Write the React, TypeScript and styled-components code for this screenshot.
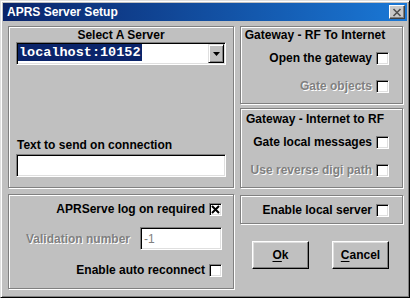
import React from "react";
import styled, { createGlobalStyle } from "styled-components";

const Global = createGlobalStyle`
  html, body { margin: 0; padding: 0; background: #c0c0c0; }
  body { font-family: "Liberation Sans", Arial, sans-serif; }
  * { box-sizing: border-box; }
`;

const Window = styled.div`
  width: 410px;
  height: 298px;
  background: #c0c0c0;
  border: 1px solid;
  border-color: #dfdfdf #000 #000 #dfdfdf;
  box-shadow: inset 1px 1px 0 #fff, inset -1px -1px 0 #808080;
  padding: 2px;
  display: flex;
  flex-direction: column;
`;

const TitleBar = styled.div`
  height: 18px;
  display: flex;
  align-items: center;
  padding: 0 2px 0 4px;
  background: linear-gradient(to right, #0a246a, #1a78d6);
  color: #fff;
  font: bold 12px "Liberation Sans", Arial, sans-serif;
`;

const TitleText = styled.span`
  flex: 1;
  line-height: 18px;
`;

const CloseButton = styled.div`
  width: 16px;
  height: 14px;
  background: #c8c8c8;
  border: 1px solid;
  border-color: #fff #404040 #404040 #fff;
  box-shadow: inset -1px -1px 0 #808080;
  display: flex;
  align-items: center;
  justify-content: center;
`;

const Body = styled.div`
  flex: 1;
  display: grid;
  grid-template-columns: 226px 163px;
  column-gap: 6px;
  padding: 5px 0 0 5px;
`;

const Column = styled.div<{ $gap: number }>`
  display: flex;
  flex-direction: column;
  gap: ${(p) => p.$gap}px;
`;

const Group = styled.div<{ $h: number; $pt?: number; $pr?: number }>`
  height: ${(p) => p.$h}px;
  border: 1px solid #808080;
  box-shadow: inset 1px 1px 0 #fff, 1px 1px 0 #fff;
  display: flex;
  flex-direction: column;
  padding-top: ${(p) => p.$pt ?? 0}px;
  padding-right: ${(p) => p.$pr ?? 0}px;
`;

const LeftGroup = styled(Group)`
  padding-left: 7px;
  padding-right: 7px;
  padding-bottom: 10px;
`;

const Heading = styled.div`
  font: bold 12px "Liberation Sans", Arial, sans-serif;
  line-height: 14px;
  text-align: center;
  color: #000;
`;

const FieldLabel = styled.div`
  font: bold 12px "Liberation Sans", Arial, sans-serif;
  line-height: 14px;
  color: #000;
  margin-top: auto;
  margin-bottom: 2px;
  padding-left: 1px;
`;

const Sunken = styled.div<{ $w?: number }>`
  height: 23px;
  width: ${(p) => (p.$w ? `${p.$w}px` : "auto")};
  background: #fff;
  border: 1px solid;
  border-color: #808080 #fff #fff #808080;
  box-shadow: inset 1px 1px 0 #000, inset -1px -1px 0 #dfdfdf;
  padding: 1px;
  display: flex;
  align-items: center;
`;

const Selected = styled.span`
  background: #0a246a;
  color: #fff;
  font: bold 13.5px "Liberation Mono", "Courier New", monospace;
  line-height: 17px;
  height: 17px;
  align-self: flex-start;
  padding: 0 1px;
`;

const DropButton = styled.div`
  margin-left: auto;
  width: 16px;
  height: 19px;
  background: #c0c0c0;
  border: 1px solid;
  border-color: #dfdfdf #000 #000 #dfdfdf;
  box-shadow: inset 1px 1px 0 #fff, inset -1px -1px 0 #808080;
  display: flex;
  align-items: center;
  justify-content: center;
`;

const Row = styled.div<{ $mt?: number; $h?: number }>`
  display: flex;
  align-items: center;
  justify-content: flex-end;
  gap: 4px;
  height: ${(p) => p.$h ?? 16}px;
  margin-top: ${(p) => p.$mt ?? 0}px;
`;

const Label = styled.span<{ $disabled?: boolean; $gapR?: number }>`
  font: bold 12px "Liberation Sans", Arial, sans-serif;
  line-height: 14px;
  color: ${(p) => (p.$disabled ? "#808080" : "#000")};
  text-shadow: ${(p) => (p.$disabled ? "1px 1px 0 #fff" : "none")};
  margin-right: ${(p) => p.$gapR ?? 0}px;
`;

const Box = styled.span`
  width: 13px;
  height: 13px;
  background: #fff;
  border: 1px solid;
  border-color: #808080 #fff #fff #808080;
  box-shadow: inset 1px 1px 0 #000, inset -1px -1px 0 #dfdfdf;
  display: flex;
  align-items: center;
  justify-content: center;
`;

const InputText = styled.span`
  font: 12px "Liberation Sans", Arial, sans-serif;
  color: #808080;
  padding-left: 2px;
`;

const ButtonRow = styled.div`
  display: flex;
  gap: 23px;
  padding-left: 12px;
  margin-top: 17px;
`;

const Button = styled.div`
  width: 57px;
  height: 28px;
  background: #c0c0c0;
  border: 1px solid;
  border-color: #fff #000 #000 #fff;
  box-shadow: inset -1px -1px 0 #808080, inset 1px 1px 0 #dfdfdf;
  display: flex;
  align-items: center;
  justify-content: center;
  font: bold 12px "Liberation Sans", Arial, sans-serif;
  color: #000;
  u { text-decoration: underline; text-underline-offset: 2px; }
`;

const Spacer = styled.div<{ $h: number }>`
  height: ${(p) => p.$h}px;
  flex: none;
`;

const Check = ({ checked }: { checked?: boolean }) => (
  <Box>
    {checked && (
      <svg width="9" height="9" viewBox="0 0 9 9">
        <path d="M1 1 L8 8 M8 1 L1 8" stroke="#000" strokeWidth="2" />
      </svg>
    )}
  </Box>
);

export default function App() {
  return (
    <>
      <Global />
      <Window>
        <TitleBar>
          <TitleText>APRS Server Setup</TitleText>
          <CloseButton>
            <svg width="10" height="9" viewBox="0 0 10 9">
              <path d="M1.5 1 L8.5 8 M8.5 1 L1.5 8" stroke="#505050" strokeWidth="1.6" />
            </svg>
          </CloseButton>
        </TitleBar>
        <Body>
          <Column $gap={6}>
            <LeftGroup $h={162} $pt={1}>
              <Heading>Select A Server</Heading>
              <Sunken>
                <Selected>localhost:10152</Selected>
                <DropButton>
                  <svg width="7" height="4" viewBox="0 0 7 4">
                    <path d="M0 0 H7 L3.5 4 Z" fill="#000" />
                  </svg>
                </DropButton>
              </Sunken>
              <FieldLabel>Text to send on connection</FieldLabel>
              <Sunken />
            </LeftGroup>
            <Group $h={95} $pt={6} $pr={11}>
              <Row>
                <Label>APRServe log on required</Label>
                <Check checked />
              </Row>
              <Row $mt={10} $h={23}>
                <Label $disabled $gapR={6}>Validation number</Label>
                <Sunken $w={82}>
                  <InputText>-1</InputText>
                </Sunken>
              </Row>
              <Row $mt={12}>
                <Label>Enable auto reconnect</Label>
                <Check />
              </Row>
            </Group>
          </Column>
          <Column $gap={0}>
            <Group $h={78} $pt={1} $pr={13}>
              <Heading>Gateway - RF To Internet</Heading>
              <Row $mt={8}>
                <Label>Open the gateway</Label>
                <Check />
              </Row>
              <Row $mt={12}>
                <Label $disabled>Gate objects</Label>
                <Check />
              </Row>
            </Group>
            <Spacer $h={4} />
            <Group $h={80} $pt={3} $pr={13}>
              <Heading>Gateway - Internet to RF</Heading>
              <Row $mt={8}>
                <Label>Gate local messages</Label>
                <Check />
              </Row>
              <Row $mt={12}>
                <Label $disabled>Use reverse digi path</Label>
                <Check />
              </Row>
            </Group>
            <Spacer $h={7} />
            <Group $h={29} $pt={6} $pr={13}>
              <Row>
                <Label>Enable local server</Label>
                <Check />
              </Row>
            </Group>
            <ButtonRow>
              <Button>
                <span><u>O</u>k</span>
              </Button>
              <Button>
                <span><u>C</u>ancel</span>
              </Button>
            </ButtonRow>
          </Column>
        </Body>
      </Window>
    </>
  );
}
